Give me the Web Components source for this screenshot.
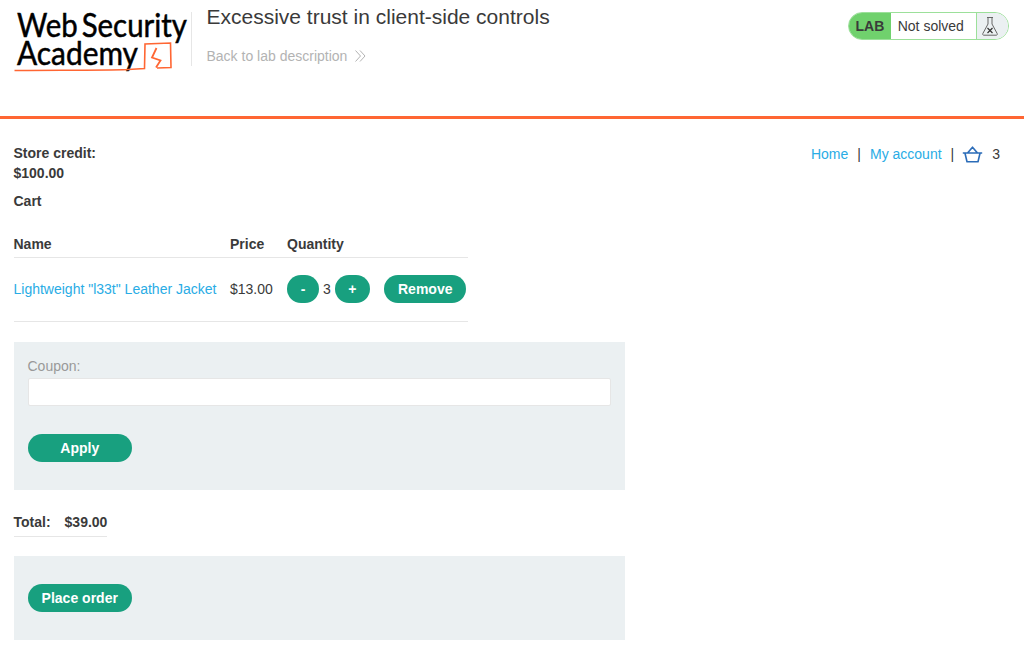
<!DOCTYPE html>
<html lang="en">
<head>
<meta charset="utf-8">
<title>Excessive trust in client-side controls</title>
<style>
  html, body { margin: 0; padding: 0; background: #fff; }
  body { font: 14px/20px "Liberation Sans", Arial, sans-serif; color: #3a3a3a; }
</style>
</head>
<body>
<academy-header>
  <span slot="title">Excessive trust in client-side controls</span>
  <span slot="back">Back to lab description</span>
</academy-header>

<shop-page>
  <store-nav slot="nav" count="3"></store-nav>
  <section-credit amount="$100.00"></section-credit>
  <cart-table></cart-table>
  <grey-panel>
    <coupon-form></coupon-form>
  </grey-panel>
  <cart-total amount="$39.00"></cart-total>
  <grey-panel compact>
    <pill-button wide>Place order</pill-button>
  </grey-panel>
</shop-page>

<script>
class PillButton extends HTMLElement {
  constructor() {
    super();
    this.attachShadow({ mode: 'open' }).innerHTML = `
      <style>
        :host { display: inline-flex; }
        button {
          height: 28px; min-width: 32px; padding: 0 13.500px; border: 0; border-radius: 14px;
          background: #18a07f; color: #fff; cursor: pointer;
          font: bold 14px/28px "Liberation Sans", Arial, sans-serif;
        }
        :host([wide]) button { width: 104.500px; padding: 0; }
      </style>
      <button type="button"><slot></slot></button>`;
  }
}

class LabStatus extends HTMLElement {
  constructor() {
    super();
    this.attachShadow({ mode: 'open' }).innerHTML = `
      <style>
        :host {
          display: flex; height: 28px; box-sizing: border-box; overflow: hidden;
          border: 1px solid #9ce09a; border-radius: 14px; font-size: 14px; line-height: 26px;
        }
        .tag { width: 42px; background: #70d16d; font-weight: bold; text-align: center; }
        .text { width: 86px; padding-left: 7px; box-sizing: border-box; }
        .icon { width: 32px; display: flex; align-items: center; padding-left: 4px; box-sizing: border-box;
                background: #ebf0f2; border-left: 1px solid #9ce09a; }
      </style>
      <div class="tag">LAB</div>
      <div class="text">Not solved</div>
      <div class="icon">
        <svg width="18" height="22" viewBox="0 0 18 22" fill="none" stroke="#666" stroke-width="1">
          <path d="M6 2.500h6M7 2.500v6.500L1.800 18.600c-.4.9.1 1.600 1 1.600h12.400c.9 0 1.400-.7 1-1.600L11 9V2.500"/>
          <path d="M6.500 13l5 5M11.500 13l-5 5" stroke="#333" stroke-width="1.200"/>
        </svg>
      </div>`;
  }
}

class AcademyLogo extends HTMLElement {
  constructor() {
    super();
    this.attachShadow({ mode: 'open' }).innerHTML = `
      <style>
        :host { display: block; width: 176px; height: 62px; }
        svg { display: block; overflow: visible; }
        text { font-family: Lato, sans-serif; font-size: 33px; stroke: #000; stroke-width: .5px; word-spacing: -4px; }
      </style>
      <svg width="176" height="62" viewBox="14 12 176 62" fill="#000">
        <text x="17" y="37" textLength="170" lengthAdjust="spacingAndGlyphs">Web Security</text>
        <text x="17" y="65" textLength="121" lengthAdjust="spacingAndGlyphs">Academy</text>
        <path d="M14.500 70.500C50 70 100 70.500 128 69.500L144.500 68.500 145 44 170.500 43 171 67.500 157 68"
              fill="none" stroke="#ff6633" stroke-width="1.600"/>
        <path d="M156.500 48L152 57.500 160.500 60.500 156 67.500" fill="none" stroke="#ff6633" stroke-width="1.800"/>
      </svg>`;
  }
}

class AcademyHeader extends HTMLElement {
  constructor() {
    super();
    this.attachShadow({ mode: 'open' }).innerHTML = `
      <style>
        :host {
          display: flex; height: 119px; box-sizing: border-box; padding: 0 15px 0 14px;
          border-bottom: 3px solid #ff6633;
        }
        .left { display: flex; height: 68px; }
        academy-logo { margin-top: 12px; }
        .rule { width: 1px; height: 54px; margin: 12px 14.500px 0 1px; background: #e6e6e6; }
        .title { font-size: 21px; line-height: 24px; margin-top: 5px; }
        .back { display: flex; align-items: center; gap: 8px; margin-top: 17px; color: #b3b3b3;
                font-size: 14px; line-height: 20px; }
        lab-status { margin: 12px 0 0 auto; width: 161px; }
      </style>
      <div class="left">
        <academy-logo></academy-logo>
        <div class="rule"></div>
        <div>
          <div class="title"><slot name="title"></slot></div>
          <div class="back">
            <slot name="back"></slot>
            <svg width="11" height="12" viewBox="0 0 11 12" fill="none" stroke="#b3b3b3">
              <path d="M.5.500L5.500 6 .5 11.500M5 .5L10 6 5 11.500"/>
            </svg>
          </div>
        </div>
      </div>
      <lab-status></lab-status>`;
  }
}

class StoreNav extends HTMLElement {
  constructor() {
    super();
    const count = this.getAttribute('count');
    this.attachShadow({ mode: 'open' }).innerHTML = `
      <style>
        :host { display: flex; align-items: center; height: 20px; font-size: 14px; }
        a { color: #29ace5; text-decoration: none; }
        .sep { margin: 0 9px; }
        svg { margin: 0 9px 0 -1px; }
      </style>
      <a href="#">Home</a><span class="sep">|</span>
      <a href="#">My account</a><span class="sep">|</span>
      <svg width="21" height="17" viewBox="0 0 21 17" fill="none" stroke="#2b6cb8" stroke-width="1.600" stroke-linejoin="round">
        <path d="M.8 7h19.400M3 7.200L5 15.800h11l2-8.600M5.500 7L10.500 1.200 15.500 7"/>
      </svg>
      <span>${count}</span>`;
  }
}

class SectionCredit extends HTMLElement {
  constructor() {
    super();
    this.attachShadow({ mode: 'open' }).innerHTML = `
      <style>
        :host { display: block; font-weight: bold; margin-top: -1px; }
        p { margin: 0; }
        .cart { margin-top: 8px; }
      </style>
      <p>Store credit:</p>
      <p>${this.getAttribute('amount')}</p>
      <p class="cart">Cart</p>`;
  }
}

class CartTable extends HTMLElement {
  constructor() {
    super();
    this.attachShadow({ mode: 'open' }).innerHTML = `
      <style>
        :host { display: block; width: 454px; margin-top: 21px; }
        table { border-collapse: collapse; width: 100%; table-layout: fixed; }
        col.name { width: 216.500px; }
        col.price { width: 57px; }
        th { text-align: left; font-weight: bold; height: 23px; padding: 0 14px 2px 0; border-bottom: 1px solid #e6e6e6; }
        td { height: 62px; padding: 0 14px 1px 0; border-bottom: 1px solid #e6e6e6; white-space: nowrap; }
        th:last-child, td:last-child { padding-right: 0; }
        a { color: #29ace5; text-decoration: none; }
        .qty { display: flex; align-items: center; }
        .qty span { margin: 0 4px; }
        .remove { margin-left: 14.500px; }
      </style>
      <table>
        <col class="name"><col class="price"><col>
        <tr><th>Name</th><th>Price</th><th>Quantity</th></tr>
        <tr>
          <td><a href="#">Lightweight "l33t" Leather Jacket</a></td>
          <td>$13.00</td>
          <td>
            <div class="qty">
              <pill-button>-</pill-button><span>3</span><pill-button>+</pill-button>
              <pill-button class="remove">Remove</pill-button>
            </div>
          </td>
        </tr>
      </table>`;
  }
}

class GreyPanel extends HTMLElement {
  constructor() {
    super();
    this.attachShadow({ mode: 'open' }).innerHTML = `
      <style>
        :host { display: block; width: 611px; box-sizing: border-box; margin-top: 20px;
                padding: 14px 14px 28px; background: #ebf0f2; }
        :host([compact]) { margin-top: 19px; padding: 28px 14px; }
      </style>
      <slot></slot>`;
  }
}

class CouponForm extends HTMLElement {
  constructor() {
    super();
    this.attachShadow({ mode: 'open' }).innerHTML = `
      <style>
        :host { display: block; }
        label { display: block; color: #999; line-height: 20px; margin-bottom: 2px; }
        input { display: block; width: 100%; height: 28px; box-sizing: border-box; margin: 0 0 28px;
                background: #fff; border: 1px solid #e6e6e6; border-radius: 2px; }
      </style>
      <label for="coupon">Coupon:</label>
      <input id="coupon" type="text">
      <pill-button wide>Apply</pill-button>`;
  }
}

class CartTotal extends HTMLElement {
  constructor() {
    super();
    this.attachShadow({ mode: 'open' }).innerHTML = `
      <style>
        :host { display: flex; gap: 14px; width: 93px; box-sizing: border-box; margin-top: 22px;
                padding-bottom: 4px; font-weight: bold; border-bottom: 1px solid #e6e6e6; white-space: nowrap; }
      </style>
      <span>Total:</span><span>${this.getAttribute('amount')}</span>`;
  }
}

class ShopPage extends HTMLElement {
  constructor() {
    super();
    this.attachShadow({ mode: 'open' }).innerHTML = `
      <style>
        :host { display: block; padding: 25px 24px 0 13.500px; }
        .wrap { display: flex; flex-direction: column; }
        .nav { display: flex; justify-content: flex-end; height: 0; }
      </style>
      <div class="nav"><slot name="nav"></slot></div>
      <div class="wrap"><slot></slot></div>`;
  }
}

customElements.define('pill-button', PillButton);
customElements.define('lab-status', LabStatus);
customElements.define('academy-logo', AcademyLogo);
customElements.define('academy-header', AcademyHeader);
customElements.define('store-nav', StoreNav);
customElements.define('section-credit', SectionCredit);
customElements.define('cart-table', CartTable);
customElements.define('grey-panel', GreyPanel);
customElements.define('coupon-form', CouponForm);
customElements.define('cart-total', CartTotal);
customElements.define('shop-page', ShopPage);
</script>
</body>
</html>
